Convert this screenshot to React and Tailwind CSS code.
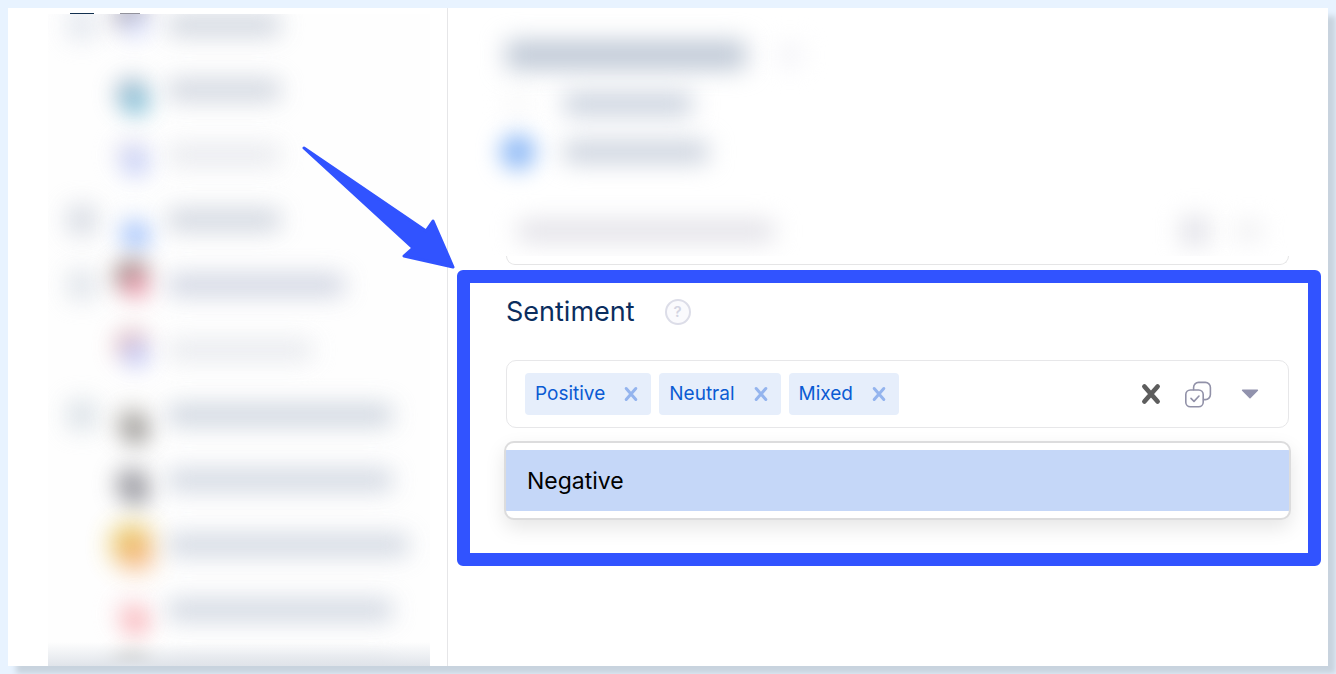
import { useState } from "react";

const channels = [
    { id: 1, label: "w-28 bg-[#c3cad6]", check: "bg-[#d9dfe9]", avatar: "-top-2 bg-[#8d899c]", badge: "bg-[#d3dafa]" },
    { id: 2, label: "w-28 bg-[#c3cad6]", check: "bg-transparent", avatar: "top-1 bg-[#aebdce]", badge: "bg-[#74b8d3]" },
    { id: 3, label: "w-28 bg-[#e2e4ea]", check: "bg-transparent", avatar: "top-0 bg-[#e4e3f1]", badge: "bg-[#c0caf6]" },
    { id: 4, label: "w-28 bg-[#c3cad6]", check: "bg-[#c9cfda]", avatar: "top-2 bg-[#f0f3fa]", badge: "bg-[#92b8fc]" },
    { id: 5, label: "w-44 bg-[#c3c9da]", check: "bg-[#d5dbe3]", avatar: "-top-2 bg-[#83726e]", badge: "bg-[#e88ea1]" },
    { id: 6, label: "w-36 bg-[#e2e4ea]", check: "bg-transparent", avatar: "-top-1 bg-[#e0b4b8]", badge: "bg-[#bcc2f4]" },
    { id: 7, label: "w-56 bg-[#c0c9d6]", check: "bg-[#cdd6de]", avatar: "top-2 bg-[#c9c7c3]", badge: "bg-[#8f8c89]" },
    { id: 8, label: "w-56 bg-[#c4ccd9]", check: "bg-transparent", avatar: "top-1 bg-[#a5a5ab]", badge: "bg-[#8c8c94]" },
    { id: 9, label: "w-60 bg-[#c4ccd9]", check: "bg-transparent", avatar: "top-0 scale-115 bg-[#dfba2e]", badge: "bg-[#f3a25c]" },
    { id: 10, label: "w-56 bg-[#c4ccd9]", check: "bg-transparent", avatar: "top-1 bg-[#fbe4e6]", badge: "bg-[#f9adb3]" },
    { id: 11, label: "w-56 bg-[#d6dae2]", check: "bg-transparent", avatar: "top-0 bg-[#8f8878]", badge: "bg-[#a5a5a5]" },
];

const CrossIcon = ({ className, strokeWidth }) => (
    <svg viewBox="0 0 16 16" className={className} fill="none" stroke="currentColor" strokeWidth={strokeWidth} strokeLinecap="round" aria-hidden="true">
        <path d="M3.2 2.5 12.8 13.5M12.8 2.5 3.2 13.5" />
    </svg>
);

const CheckAllIcon = () => (
    <svg viewBox="0 0 28 28" className="size-7" fill="none" stroke="currentColor" strokeWidth="1.6" strokeLinecap="round" strokeLinejoin="round" aria-hidden="true">
        <rect x="1.8" y="10" width="17.4" height="16.8" rx="4.6" />
        <path d="M9.6 9.6V7.4a5 5 0 0 1 5-5h6.8a5 5 0 0 1 5 5v7.2a5 5 0 0 1-5 5h-1.8" />
        <path d="m7 18.4 3 3 5-5.4" />
    </svg>
);

const Sidebar = () => (
    <aside className="w-1/3 shrink-0 border-r border-[#e6e6e8] pl-10 pr-[17px] pt-[5px] flex flex-col overflow-hidden">
        <div className="flex h-px shrink-0 gap-[26px] pl-[22px]">
            <span className="w-6 bg-[#12304f]" />
            <span className="w-5 bg-[#92929c]" />
        </div>
        <div className="relative flex-1 min-h-0 overflow-hidden bg-[#fefefe]">
            <ul className="-mt-[22px]">
                {channels.map((channel) => (
                    <li key={channel.id} className="flex h-[65px] items-center pl-5">
                        <input type="checkbox" aria-label={`Channel ${channel.id}`} className={`size-7 shrink-0 appearance-none rounded opacity-80 blur-[12px] ${channel.check}`} />
                        <div className={`relative ml-[18px] size-9 shrink-0 rounded-full opacity-85 blur-[11px] ${channel.avatar}`}>
                            <span className={`absolute left-2 top-3 size-7 rounded-full ${channel.badge}`} />
                        </div>
                        <span className={`ml-[18px] h-5 rounded opacity-85 blur-[12px] ${channel.label}`} />
                    </li>
                ))}
            </ul>
            <div className="absolute inset-x-0 bottom-0 h-6 bg-linear-to-b from-[#e0e4ea]/0 to-[#e0e4ea]" />
        </div>
    </aside>
);

const KeywordFilter = () => (
    <div className="ml-[58px] mr-[39px]">
        <div className="h-[248px] overflow-hidden -ml-8 pl-8 -mr-8 pr-8">
            <div className="flex h-6 mt-[35px] items-center">
                <span className="h-7 w-60 rounded bg-[#bcc6d4] blur-[12px]" />
                <span className="ml-8 size-6 rounded-full bg-[#f1f1f6] blur-[12px]" />
            </div>
            <div className="mt-[25px] flex h-6 items-center">
                <input type="radio" name="keyword" aria-label="Any" className="size-6 appearance-none rounded-full bg-[#f7f7f8] blur-[12px]" />
                <span className="ml-[34px] h-5 w-32 rounded bg-[#c2cbd9] blur-[12px]" />
            </div>
            <div className="mt-6 flex h-6 items-center">
                <input type="radio" name="keyword" aria-label="All" defaultChecked className="size-9 -ml-1.5 appearance-none rounded-full bg-[#8fbaf6] blur-[11px]" />
                <span className="ml-7 h-5 w-36 rounded bg-[#c4ccd9] blur-[12px]" />
            </div>
            <div className="mt-[53px] flex h-7 items-center pl-3 pr-7">
                <span className="h-5 w-64 rounded bg-[#dfdee5] blur-[12px]" />
                <span className="ml-auto size-7 rounded bg-[#e0e0e7] blur-[12px]" />
                <span className="ml-7 h-4 w-6 rounded bg-[#e9e9ec] blur-[12px]" />
            </div>
        </div>
        <div className="h-[9px] rounded-b-[9px] border border-t-0 border-[#e5e5e6]" />
    </div>
);

const SentimentFilter = () => {
    const [selected, setSelected] = useState(["Positive", "Neutral", "Mixed"]);
    const options = ["Positive", "Neutral", "Mixed", "Negative"];
    const remaining = options.filter((option) => !selected.includes(option));

    return (
        <section className="mt-[5px] ml-[9px] mr-[7px] rounded-md border-[13px] border-[#3153ff] pt-[11px] pb-[33px] pl-9 pr-[19px]">
            <div className="flex h-9 items-center">
                <h2 className="text-[27px] leading-9 text-[#0a2d5e]">Sentiment</h2>
                <button aria-label="Help" className="ml-[30px] flex size-[26px] items-center justify-center rounded-full border-2 border-[#dcdde8] bg-[#fafafd] text-[15px] font-semibold text-[#d3d4e2]">
                    ?
                </button>
            </div>

            <div className="mt-[30px] flex h-[68px] items-center rounded-[10px] border border-[#e7e7e9] pl-[18px] pr-[29px]">
                <div className="flex gap-2">
                    {selected.map((name) => (
                        <span key={name} className="flex h-[42px] items-center rounded bg-[#e6eefb] pl-2.5 pr-3 text-[#0b5bd3]">
                            <span className="text-[19px] leading-7">{name}</span>
                            <button aria-label={`Remove ${name}`} onClick={() => setSelected(selected.filter((s) => s !== name))} className="ml-[18px] text-[#94b4ee]">
                                <CrossIcon className="size-4" strokeWidth="3" />
                            </button>
                        </span>
                    ))}
                </div>
                <button aria-label="Clear all" onClick={() => setSelected([])} className="ml-auto text-[#5d5d5d]">
                    <CrossIcon className="size-[22px]" strokeWidth="3.4" />
                </button>
                <button aria-label="Select all" onClick={() => setSelected(options)} className="ml-[22px] text-[#9191a8]">
                    <CheckAllIcon />
                </button>
                <button aria-label="Toggle options" className="ml-[29px] text-[#9192ad]">
                    <svg viewBox="0 0 18 10" className="h-2.5 w-[18px]" fill="currentColor" stroke="currentColor" strokeWidth="1.5" strokeLinejoin="round" aria-hidden="true">
                        <path d="M1.6 1.2h14.8L9 8.8Z" />
                    </svg>
                </button>
            </div>

            <ul role="listbox" aria-label="Sentiment" className="mt-[13px] -mx-0.5 overflow-hidden rounded-[10px] border-2 border-[#dcdcdd] bg-white py-[7px] shadow-[0_8px_20px_rgba(0,0,0,0.1)]">
                {remaining.map((name) => (
                    <li key={name} role="option" aria-selected="false" onClick={() => setSelected([...selected, name])} className="flex h-[61px] cursor-pointer items-center bg-[#c5d7f8] pl-[21px] text-[23px] leading-8 text-black">
                        {name}
                    </li>
                ))}
            </ul>
        </section>
    );
};

const App = () => {
    return (
        <div className="h-screen bg-[#e8f3ff] p-2 font-['Inter',sans-serif]">
            <div className="relative flex h-full bg-white shadow-[8px_8px_6px_#c8d3de]">
                <Sidebar />
                <main className="min-w-0 flex-1">
                    <KeywordFilter />
                    <SentimentFilter />
                </main>
                {/* pointer from the channel list to the sentiment filter */}
                <svg viewBox="0 0 156 126" className="absolute left-[293px] top-[137px] w-[156px]" fill="#3153ff" stroke="#3153ff" strokeWidth="3" strokeLinejoin="round" aria-hidden="true">
                    <path d="M3 3 125 86 132 76 152 122 103 111 112 103Z" />
                </svg>
            </div>
        </div>
    );
};

export default App;
